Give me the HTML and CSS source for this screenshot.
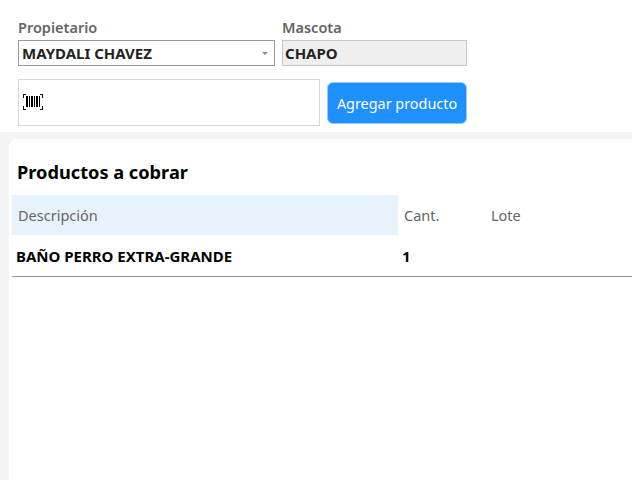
FILE: index.html
```html
<!DOCTYPE html>
<html lang="es">
<head>
<meta charset="utf-8">
<title>Productos a cobrar</title>
<link rel="stylesheet" href="styles.css">
</head>
<body>
<section class="top">
  <div class="fields">
    <div class="field owner">
      <label class="label">Propietario</label>
      <div class="control select"><span>MAYDALI CHAVEZ</span><i class="caret"></i></div>
    </div>
    <div class="field pet">
      <label class="label">Mascota</label>
      <div class="control readonly"><span>CHAPO</span></div>
    </div>
  </div>
  <div class="actions">
    <div class="scan">
      <svg class="barcode" width="20" height="16" viewBox="0 0 20 16" shape-rendering="crispEdges" aria-hidden="true">
        <path d="M0 0h3v1H1v3H0zM17 0h3v4h-1V1h-2zM0 12h1v3h2v1H0zM19 12h1v4h-3v-1h2z" fill="#111"/>
        <path d="M3 2h2v11H3zM6 2h1v11H6zM8 2h2v11H8zM11 2h1v11h-1zM13 2h2v11h-2zM16 2h1v11h-1z" fill="#000"/>
      </svg>
    </div>
    <button class="add">Agregar producto</button>
  </div>
</section>
<section class="card">
  <h2 class="title">Productos a cobrar</h2>
  <div class="row head">
    <div class="c-desc">Descripción</div>
    <div class="c-qty">Cant.</div>
    <div class="c-lot">Lote</div>
  </div>
  <div class="row item">
    <div class="c-desc">BAÑO PERRO EXTRA-GRANDE</div>
    <div class="c-qty">1</div>
    <div class="c-lot"></div>
  </div>
</section>
</body>
</html>
```
FILE: styles.css
```css
* { box-sizing: border-box; }
html, body { margin: 0; height: 100%; }
body {
  background: #f3f4f6;
  font-family: "Noto Sans", "Open Sans", "Liberation Sans", sans-serif;
  font-size: 14.5px;
  overflow: hidden;
  display: flex;
  flex-direction: column;
}
.top {
  background: #fff;
  height: 132px;
  padding: 18px 0 0 18px;
}
.fields { display: flex; gap: 7px; }
.label {
  display: block;
  height: 22px;
  line-height: 19px;
  font-weight: 600;
  color: #666;
}
.control {
  height: 26px;
  font-size: 15px;
  font-weight: 700;
  color: #222;
  padding: 0 3px;
  border: 1px solid #999;
  display: flex;
  align-items: center;
  justify-content: space-between;
}
.owner .control { width: 257px; }
.pet .control { width: 185px; padding-left: 2px; background: #efefef; border-color: #c6c6c6; }
.caret {
  margin: 0 3px 0 0;
  border-left: 3px solid transparent;
  border-right: 3px solid transparent;
  border-top: 3px solid #888;
}
.actions { display: flex; gap: 7px; margin-top: 13px; align-items: flex-start; }
.scan {
  width: 302px;
  height: 47px;
  border: 1px solid #d8d8d8;
  padding: 14px 0 0 4px;
}
.barcode { display: block; }
.add {
  width: 140px;
  height: 42px;
  margin-top: 3px;
  background: #1e90ff;
  border: 1px solid #9cc8f0;
  border-radius: 6px;
  color: #fff;
  font: 14.4px "Noto Sans", "Open Sans", sans-serif;
  padding: 0;
}
.card {
  flex: 1;
  margin: 7px 0 0 9px;
  background: #fff;
  border-radius: 8px 0 0 0;
  padding-left: 3px;
}
.title {
  margin: 0;
  height: 56px;
  padding: 21px 0 0 5px;
  font-size: 18.2px;
  line-height: 24px;
  font-weight: 700;
  color: #000;
}
.row { display: flex; }
.c-desc { width: 386px; padding-left: 6px; }
.c-qty { width: 87px; padding-left: 6px; }
.c-lot { flex: 1; padding-left: 6px; }
.head { height: 40px; line-height: 41px; color: #666; }
.head .c-desc { background: #e6f3fc; }
.item {
  height: 42px;
  line-height: 42px;
  font-size: 15px;
  font-weight: 700;
  color: #000;
  border-bottom: 1px solid #999;
}
.item .c-desc { padding-left: 4px; }
.item .c-qty { padding-left: 4px; }
```
